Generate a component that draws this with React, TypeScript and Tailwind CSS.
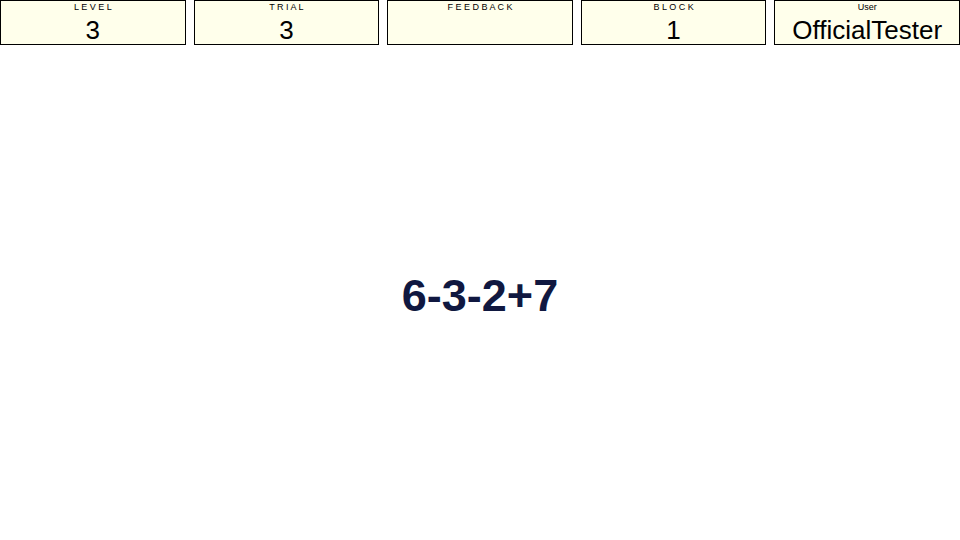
type PanelProps = { label: string; value: string };

function Panel({ label, value }: PanelProps) {
  return (
    <section className="h-[45px] min-w-0 border border-black bg-[#ffffeb] text-center text-black">
      <h2 className="text-[9px] leading-[12px]">{label}</h2>
      <p className="pt-[3px] text-[26px] leading-[28px]">{value}</p>
    </section>
  );
}

export default function App() {
  return (
    <div className="flex min-h-screen flex-col bg-white font-['Liberation_Sans',Arial,sans-serif]">
      <header className="grid grid-cols-5 gap-2">
        <Panel label="L E V E L" value="3" />
        <Panel label="T R I A L" value="3" />
        <Panel label="F E E D B A C K" value="" />
        <Panel label="B L O C K" value="1" />
        <Panel label="User" value="OfficialTester" />
      </header>
      <main className="flex flex-1 items-center justify-center pt-[6px]">
        <p className="text-[45px] leading-[52px] font-bold text-[#101840]">6-3-2+7</p>
      </main>
    </div>
  );
}
